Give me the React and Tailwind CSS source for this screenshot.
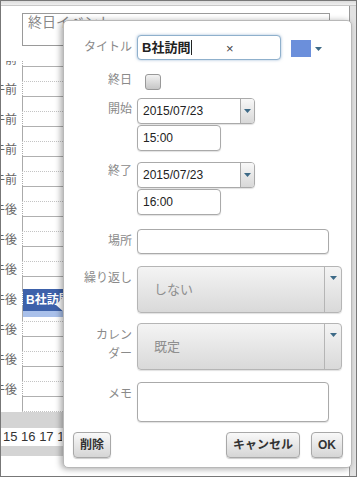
import React from "react";

// Calendar rows behind the dialog: 15px slots, labelled on every other one
const slots = Array.from({ length: 25 }, (_, i) => {
  const hour = Math.floor(i / 2);
  const label = i % 2 === 0 ? (hour < 5 ? "午前" : "午後") : "";
  return { dotted: i % 2 === 0, label };
});

function Arrow() {
  return (
    <svg width="7" height="4" viewBox="0 0 7 4">
      <path d="M0 0h7L3.5 4z" fill="#3d6a87" />
    </svg>
  );
}

function Label({ children, className = "" }) {
  return (
    <div className={`w-[68px] shrink-0 text-right text-[12px] leading-[16px] text-[#8a8a8a] ${className}`}>
      {children}
    </div>
  );
}

function DateField({ value }) {
  return (
    <div className="ml-[5px] flex h-[26px] w-[118px] overflow-hidden rounded-[4px] border border-[#aaa] bg-white shadow-[0_1px_1px_rgba(0,0,0,0.12)]">
      <div className="flex flex-1 items-center pl-[5px] text-[12px] text-[#222]">{value}</div>
      <div className="flex w-[14px] items-center justify-center border-l border-[#aaa] bg-gradient-to-b from-[#f8f8f8] to-[#d8d8d8]">
        <Arrow />
      </div>
    </div>
  );
}

function TimeField({ value }) {
  return (
    <div className="ml-[73px] mt-[1px] flex h-[26px] w-[84px] items-center rounded-[4px] border border-[#aaa] bg-white pl-[5px] text-[12px] text-[#222] shadow-[0_1px_1px_rgba(0,0,0,0.12)]">
      {value}
    </div>
  );
}

function SelectBox({ value }) {
  return (
    <div className="ml-[5px] flex h-[47px] w-[205px] overflow-hidden rounded-[4px] border border-[#b5b5b5] bg-gradient-to-b from-[#f4f4f4] to-[#d9d9d9] shadow-[0_1px_1px_rgba(0,0,0,0.12)]">
      <div className="flex flex-1 items-center pl-[16px] text-[13px] text-[#8f8f8f]">{value}</div>
      <div className="flex w-[17px] justify-center border-l border-[#b5b5b5] pt-[9px]">
        <Arrow />
      </div>
    </div>
  );
}

function Button({ children }) {
  return (
    <div className="flex h-[26px] items-center rounded-[4px] border border-[#a8a8a8] bg-gradient-to-b from-[#f9f9f9] to-[#d5d5d5] px-[6px] text-[12px] font-bold text-[#333] shadow-[0_1px_1px_rgba(0,0,0,0.2)]">
      {children}
    </div>
  );
}

export default function App() {
  return (
    <div className="relative h-[477px] w-[357px] overflow-hidden border border-[#777] bg-white font-['Liberation_Sans','Noto_Sans_CJK_JP',sans-serif]">
      {/* Top bar */}
      <div className="h-[5px] border-b border-[#c8c8c8] bg-gradient-to-b from-[#dcdcdc] to-[#efefef]" />

      <div className="flex h-[470px]">
        {/* Calendar */}
        <div className="w-[348px]">
          <div className="ml-[21px] mt-[7px] h-[33px] w-[308px] border border-[#9a9a9a] pl-[5px] text-[14px] leading-[17px] text-[#888]">
            終日イベント
          </div>
          <div className="h-[15px]" />
          <div className="relative h-[351px] overflow-hidden">
            <div className="relative -mt-[10px]">
              {slots.map((s, i) => (
                <div key={i} className="flex h-[15px]">
                  <div className="flex w-[21px] justify-end overflow-hidden pr-[5px] pt-[2px] text-[12px] leading-[15px] text-[#666] whitespace-nowrap">
                    {s.label}
                  </div>
                  <div
                    className={`flex-1 border-l border-l-[#aaa] ${
                      s.dotted ? "border-t border-dotted border-t-[#c4c4c4]" : "border-t border-t-[#b0b0b0]"
                    }`}
                  />
                </div>
              ))}
              {/* Event */}
              <div className="absolute left-[22px] top-[238px] w-[60px]">
                <div className="h-[22px] bg-[#3d61aa] pl-[3px] text-[12px] font-bold leading-[22px] text-white">
                  B社訪問
                </div>
                <div className="h-[6px] bg-[#a9c0ea]" />
              </div>
            </div>
          </div>
          <div className="h-[16px] bg-[#d4d4d4]" />
          <div className="h-[18px] w-[61px] overflow-hidden whitespace-nowrap pl-[2px] text-[13px] leading-[18px] text-[#333]">
            15 16 17 18
          </div>
          <div className="h-[10px] bg-[#d4d4d4]" />
        </div>
        {/* Right strip */}
        <div className="flex-1 border-l border-[#9a9a9a] bg-[#e2e2e2]" />
      </div>

      {/* Dialog pointer */}
      <svg className="absolute left-[54px] top-[294px]" width="10" height="18" viewBox="0 0 10 18">
        <path d="M10 0L1 10L10 18z" fill="#fff" />
      </svg>

      {/* Dialog */}
      <div className="absolute left-[62px] top-[19px] flex h-[448px] w-[289px] flex-col rounded-[5px] border border-[#b8b8b8] bg-white pt-[14px] shadow-[-2px_1px_6px_rgba(0,0,0,0.35)]">
        <div className="flex">
          <Label className="pt-[4px]">タイトル</Label>
          <div className="relative ml-[5px] flex h-[25px] w-[144px] items-center rounded-[4px] border border-[#8fb0cc] bg-white pl-[4px] text-[13px] font-bold text-[#222] shadow-[0_0_3px_rgba(80,130,180,0.55)]">
            B社訪問
            <span className="ml-[1px] h-[15px] w-[1px] bg-[#222]" />
            <span className="absolute left-[88px] top-[3px] text-[13px] font-normal text-[#444]">×</span>
          </div>
          <div className="ml-[10px] mt-[5px] h-[17px] w-[20px] bg-[#6b8fdb]" />
          <div className="ml-[4px] mt-[12px]">
            <Arrow />
          </div>
        </div>

        <div className="mt-[14px] flex">
          <Label className="-mt-[2px]">終日</Label>
          <div className="ml-[13px] h-[16px] w-[16px] rounded-[3px] border border-[#999] bg-gradient-to-b from-[#f2f2f2] to-[#c6c6c6]" />
        </div>

        <div className="mt-[8px] flex">
          <Label className="pt-[3px]">開始</Label>
          <DateField value="2015/07/23" />
        </div>
        <TimeField value="15:00" />

        <div className="mt-[11px] flex">
          <Label className="pt-[1px]">終了</Label>
          <DateField value="2015/07/23" />
        </div>
        <TimeField value="16:00" />

        <div className="mt-[14px] flex">
          <Label className="pt-[4px]">場所</Label>
          <div className="ml-[5px] h-[25px] w-[192px] rounded-[4px] border border-[#aaa] bg-white shadow-[0_1px_1px_rgba(0,0,0,0.12)]" />
        </div>

        <div className="mt-[12px] flex">
          <Label className="pt-[4px]">繰り返し</Label>
          <SelectBox value="しない" />
        </div>

        <div className="mt-[10px] flex">
          <Label className="pt-[3px] leading-[19px]">
            カレン
            <br />
            ダー
          </Label>
          <SelectBox value="既定" />
        </div>

        <div className="mt-[12px] flex">
          <Label className="pt-[4px]">メモ</Label>
          <div className="ml-[5px] h-[40px] w-[192px] rounded-[4px] border border-[#aaa] bg-white shadow-[0_1px_1px_rgba(0,0,0,0.12)]" />
        </div>

        <div className="mt-[10px] flex pl-[9px] pr-[8px]">
          <Button>削除</Button>
          <div className="flex-1" />
          <Button>キャンセル</Button>
          <div className="w-[11px]" />
          <Button>OK</Button>
        </div>
      </div>
    </div>
  );
}
